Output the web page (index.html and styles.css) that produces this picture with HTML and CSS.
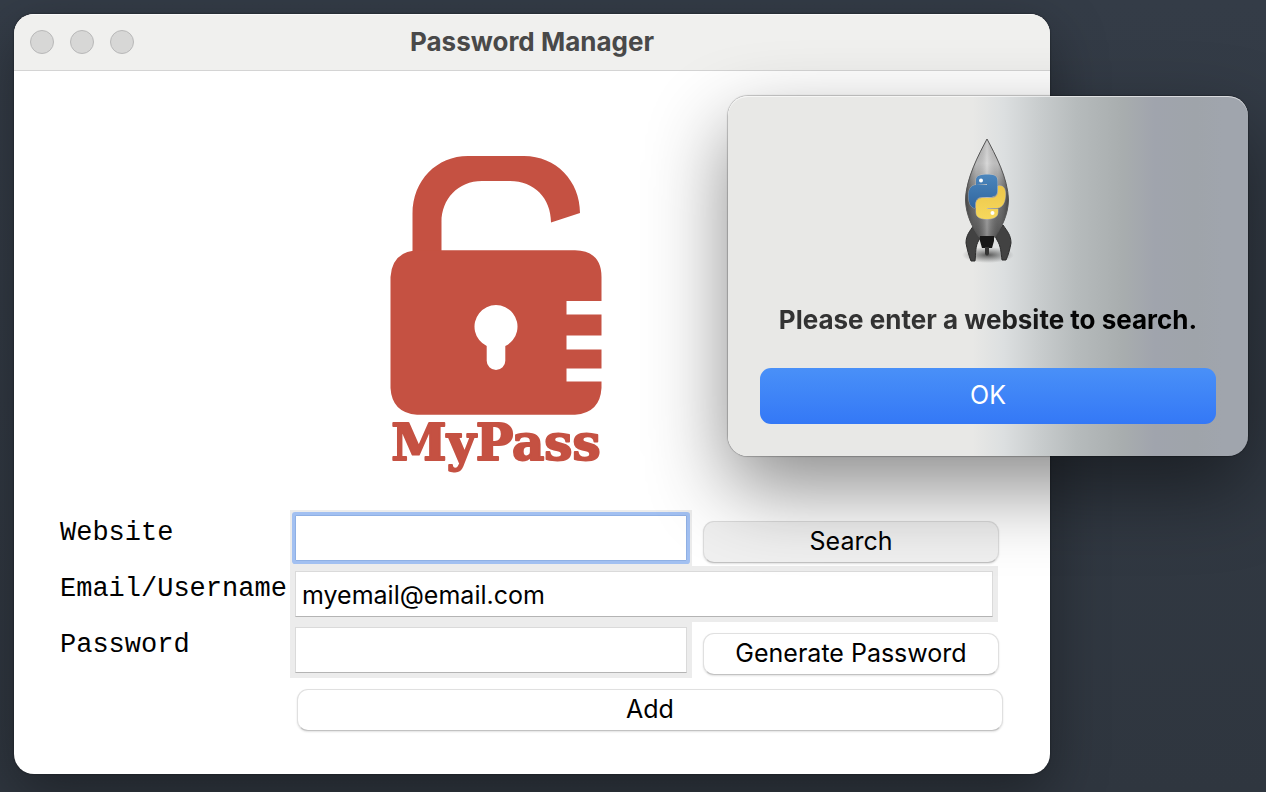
FILE: index.html
```html
<!DOCTYPE html>
<html lang="en">
<head>
<meta charset="utf-8">
<title>Password Manager</title>
<link rel="stylesheet" href="styles.css">
</head>
<body class="desktop">
<main class="window">
  <header class="titlebar">
    <div class="lights">
      <button class="light" type="button" aria-label="Close"></button>
      <button class="light" type="button" aria-label="Minimize"></button>
      <button class="light" type="button" aria-label="Zoom"></button>
    </div>
    <h1 class="title">Password Manager</h1>
  </header>
  <form class="form">
    <svg class="logo" viewBox="290 110 400 400" role="img" aria-label="MyPass">
      <g fill="#c55142">
        <path d="M412.500 254V214C412.500 180 437 156 468 156H524C556 156 580 181 580 213L551 222.500C551 198 534 181 510 181H482C458 181 441.500 199 441.500 222V254Z"/>
        <path fill-rule="evenodd" d="M417 250.300H575Q601.500 251 601.500 277V301H566.500V314.500H601.500V335.500H566.500V349.500H601.500V368.500H566.500V381.500H601.500V388Q600 413 575 414.700H417Q392 413 390.500 388V277Q392 252 417 250.300ZM486.700 346V360.700A9.300 9.300 0 0 0 505.300 360.700V346A21.500 21.500 0 1 0 486.700 346Z"/>
        <text class="logo-text" x="496" y="460" text-anchor="middle">MyPass</text>
      </g>
    </svg>
    <label class="label" for="website">Website</label>
    <div class="field focused"><input class="input" id="website" type="text"></div>
    <button class="button shaded" type="button">Search</button>
    <label class="label" for="email">Email/Username</label>
    <div class="field wide"><input class="input" id="email" type="text" value="myemail@email.com"></div>
    <label class="label" for="password">Password</label>
    <div class="field"><input class="input" id="password" type="text"></div>
    <button class="button" type="button">Generate Password</button>
    <button class="button add" type="button">Add</button>
  </form>
</main>

<section class="dialog" role="alertdialog" aria-labelledby="message">
  <svg class="rocket" viewBox="924 136 128 128" aria-hidden="true">
    <defs>
      <linearGradient id="hull" x1="0" y1="0" x2="0" y2="1">
        <stop offset="0" stop-color="#aaa"/><stop offset=".25" stop-color="#c4c4c4"/>
        <stop offset=".6" stop-color="#7c7c7c"/><stop offset="1" stop-color="#505050"/>
      </linearGradient>
      <linearGradient id="shade" x1="0" y1="0" x2="1" y2="0">
        <stop offset="0" stop-color="#222" stop-opacity=".6"/>
        <stop offset=".25" stop-color="#666" stop-opacity=".1"/>
        <stop offset=".5" stop-color="#fff" stop-opacity=".35"/>
        <stop offset=".75" stop-color="#777" stop-opacity=".1"/>
        <stop offset="1" stop-color="#222" stop-opacity=".6"/>
      </linearGradient>
      <linearGradient id="blue" x1="0" y1="0" x2="0" y2="1">
        <stop offset="0" stop-color="#4b86bd"/><stop offset="1" stop-color="#31669f"/>
      </linearGradient>
      <linearGradient id="yellow" x1="0" y1="0" x2="0" y2="1">
        <stop offset="0" stop-color="#edc64a"/><stop offset="1" stop-color="#f6d85c"/>
      </linearGradient>
      <radialGradient id="ground">
        <stop offset="0" stop-color="#333" stop-opacity=".8"/><stop offset="1" stop-color="#555" stop-opacity="0"/>
      </radialGradient>
    </defs>
    <ellipse cx="988" cy="255" rx="26" ry="8" fill="url(#ground)"/>
    <path d="M974 225C970 231 966 235 966 243C967 249 969 256 971 261H975C976 253 975 246 979 240L981 236ZM1003 225C1007 231 1011 235 1011 243C1010 249 1008 256 1006 260H1002C1001 253 1001 246 997 240L995 236Z" fill="#424242" stroke="#2c2c2c"/>
    <path d="M987 139C979 154 966 178 965.500 200C966 216 973 228 979 237H995C1001 228 1008 216 1008.500 200C1008 178 995 154 987 139Z" fill="url(#hull)"/>
    <path d="M987 139C979 154 966 178 965.500 200C966 216 973 228 979 237H995C1001 228 1008 216 1008.500 200C1008 178 995 154 987 139Z" fill="url(#shade)" stroke="#555" stroke-width="1"/>
    <path d="M980 236H994V241L992 248H982L980 241Z" fill="#181818"/>
    <path d="M985 247H989V254Q987 257 985 254Z" fill="#333"/>
    <g stroke="#cbd0d4" stroke-opacity=".5" stroke-width="1" paint-order="stroke">
      <path d="M976 185V180C976 175 982 174.500 987 174.500C993 174.500 997.500 175 997.500 181V190C997.500 195 994 197 990 197H983C977 197 975 200 975 208C970 208 968.500 201 968.500 196C968.500 189 971 185 976 185H987V184Z" fill="url(#blue)"/>
      <path d="M998 186C1003 185 1005.500 188 1005.500 194C1005.500 203 1002 208 997 208H987V209H998V212C998 218 992 219 987 219C981 219 976 218 976 212V204C976 200 979 198 983 198H991C996 198 998 195 998 191Z" fill="url(#yellow)"/>
    </g>
    <circle cx="981" cy="180.500" r="2" fill="#fff"/>
    <circle cx="992.500" cy="213" r="2" fill="#fff"/>
  </svg>
  <p class="message" id="message">Please enter a website to search.</p>
  <button class="ok" type="button">OK</button>
</section>
</body>
</html>
```
FILE: styles.css
```css
* {
  box-sizing: border-box;
}

.desktop {
  display: flex;
  min-height: 100vh;
  margin: 0;
  padding: 14px 216px 18px 14px;
  background: linear-gradient(#343c47, #2f363f);
  font-family: Inter, "Liberation Sans", sans-serif;
  font-size: 25px;
  color: #000;
}

.window {
  flex: 1;
  border-radius: 20px;
  background: #fff;
  overflow: hidden;
  box-shadow: 0 0 2px #14181c, 0 20px 56px rgba(0, 0, 0, 0.35);
}

.titlebar {
  display: grid;
  grid-template-columns: 1fr auto 1fr;
  align-items: center;
  height: 57px;
  padding: 0 16px;
  border-bottom: 1px solid #d4d4d4;
  background: #f0f0ee;
  box-shadow: inset 0 1px #fafafa;
}

.lights {
  display: flex;
  gap: 16px;
}

.light {
  width: 24px;
  height: 24px;
  padding: 0;
  border: 1px solid #b8b8b8;
  border-radius: 50%;
  background: #d7d7d6;
}

.title {
  margin: 0;
  color: #494949;
  font-size: 26px;
  font-weight: 700;
  line-height: 32px;
}

.form {
  display: grid;
  grid-template-columns: 230px minmax(0, 402fr) minmax(0, 314fr);
  grid-template-rows: auto repeat(4, 56px);
  padding: 39px 44px 40px 46px;
}

.logo {
  grid-column: 2;
  width: 400px;
  height: 400px;
}

.logo-text {
  font: 700 50px "DejaVu Serif", serif;
  stroke: #c55142;
  stroke-width: 2px;
  stroke-linejoin: round;
}

.label {
  grid-column: 1;
  align-self: start;
  font-family: "Courier New", "Liberation Mono", monospace;
  font-size: 27px;
  line-height: 46px;
}

.field {
  padding: 5px;
  background: #ececec;
}

.wide {
  grid-column: 2 / 4;
  margin-right: 8px;
}

.input {
  display: block;
  width: 100%;
  height: 46px;
  padding: 2px 6px 0;
  border: 1px solid #dadada;
  border-bottom-color: #b4b4b4;
  outline: 0;
  background: #fff;
  color: #000;
  font: inherit;
}

.focused .input {
  border-color: #8fb0e4;
  border-radius: 1px;
  box-shadow: 0 0 0 3px #a2c0f1;
}

.button {
  height: 42px;
  margin: 11px 7px 3px 11px;
  padding: 0 0 2px;
  border: 1px solid #e0e0e0;
  border-bottom-color: #c2c2c2;
  border-radius: 11px;
  background: #fff;
  box-shadow: 0 1px 2px rgba(0, 0, 0, 0.12);
  color: #000;
  font: inherit;
}

.shaded {
  background: #f0f0f0;
  border-color: #dcdcdc #dcdcdc #c2c2c2;
}

.add {
  grid-column: 2 / 4;
  margin-left: 7px;
  margin-right: 3px;
}

.dialog {
  position: absolute;
  top: 96px;
  right: 18px;
  display: flex;
  flex-direction: column;
  align-items: center;
  width: 520px;
  padding: 40px 32px 32px;
  border-radius: 20px;
  background: linear-gradient(90deg, #e8e8e6 47%, #dcdfe0 53%, #c8cccd 60%, #b6bbbc 67%, #a8adae 76%, #a0a4ad 82%, #9fa4aa 90%, #a0a5ad 95%);
  box-shadow: inset 0 1px rgba(255, 255, 255, 0.6), 0 0 1px 1px rgba(0, 0, 0, 0.22), 0 32px 80px rgba(0, 0, 0, 0.46);
}

.rocket {
  width: 128px;
  height: 128px;
}

.message {
  margin: 40px 0 32px;
  background: linear-gradient(90deg, #333 45%, #000 75%);
  background-clip: text;
  -webkit-background-clip: text;
  color: transparent;
  font-size: 26px;
  font-weight: 700;
  line-height: 32px;
  white-space: nowrap;
}

.ok {
  align-self: stretch;
  height: 56px;
  padding: 0 0 2px;
  border: 0;
  border-radius: 11px;
  background: linear-gradient(#4990f8, #3478f6);
  color: #fff;
  font: inherit;
}
```
